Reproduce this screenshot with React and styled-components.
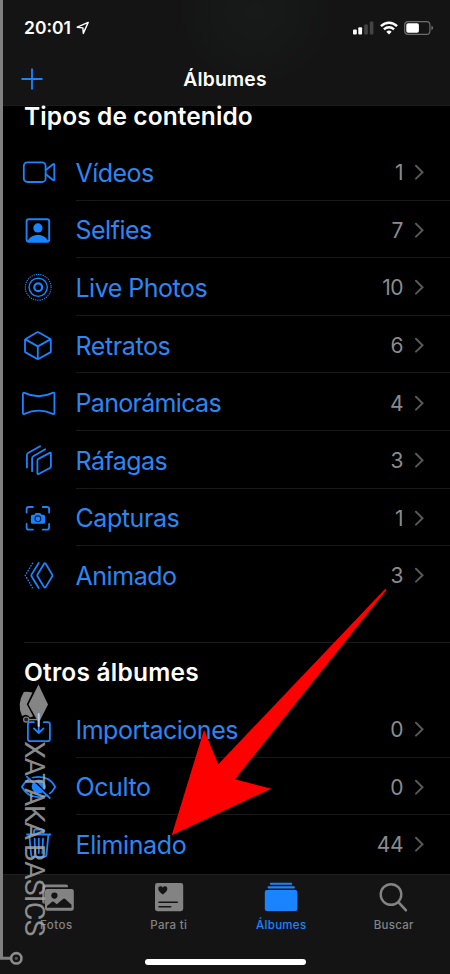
import React from "react";
import styled, { createGlobalStyle } from "styled-components";

const GlobalStyle = createGlobalStyle`
  body {
    margin: 0;
    background: #000;
    font-family: Inter, "Liberation Sans", sans-serif;
  }
`;

const Screen = styled.div`
  position: relative;
  display: flex;
  flex-direction: column;
  width: 450px;
  height: 974px;
  overflow: hidden;
  background: #000;
`;

const Header = styled.header`
  box-sizing: border-box;
  height: 106px;
  flex-shrink: 0;
  background: radial-gradient(circle at 255px 10px, #181a1a 0, #141414 80px);
  border-bottom: 1px solid #1b1b1b;
`;

const StatusBar = styled.div`
  display: flex;
  justify-content: space-between;
  align-items: center;
  height: 55px;
  padding: 0 16px 0 24px;
`;

const StatusGroup = styled.div`
  display: flex;
  align-items: center;
  gap: ${(props) => props.$gap}px;
`;

const Time = styled.span`
  color: #fff;
  font-size: 17.5px;
  font-weight: 600;
`;

const NavBar = styled.nav`
  display: grid;
  grid-template-columns: 60px 1fr 60px;
  align-items: center;
  height: 48px;
`;

const AddButton = styled.button`
  display: flex;
  padding: 0 0 0 21px;
  border: none;
  background: none;
`;

const NavTitle = styled.h1`
  margin: 0;
  color: #fff;
  font-size: 19.3px;
  font-weight: 600;
  line-height: 24px;
  text-align: center;
  letter-spacing: 0.15px;
`;

const Content = styled.main`
  flex: 1;
  min-height: 0;
`;

const Section = styled.section`
  padding-bottom: ${(props) => props.$bottom || 0}px;
`;

const SectionTitle = styled.h2`
  box-sizing: border-box;
  height: ${(props) => props.$height}px;
  margin: 0 0 0 24px;
  padding-top: ${(props) => props.$top}px;
  border-top: ${(props) => (props.$line ? "1px solid #1c1c1c" : "none")};
  color: #fff;
  font-size: 24.5px;
  font-weight: 600;
  line-height: 19px;
  letter-spacing: ${(props) => props.$spacing}px;
`;

const Row = styled.div`
  display: flex;
  height: 57.6px;
  padding-left: 20.2px;
`;

const IconBox = styled.div`
  display: flex;
  align-items: center;
  width: 55.8px;
  padding-top: 1px;
  flex-shrink: 0;
`;

const RowBody = styled.div`
  box-sizing: border-box;
  display: flex;
  align-items: center;
  flex: 1;
  padding-right: 25px;
  border-bottom: 1px solid ${(props) => (props.$last ? "transparent" : "#191919")};
`;

const Name = styled.span`
  flex: 1;
  margin-left: -0.5px;
  padding-top: 3px;
  color: #2b87f3;
  font-size: 25px;
  line-height: 30px;
  letter-spacing: ${(props) => props.$spacing}px;
`;

const Count = styled.span`
  margin-right: 11px;
  padding-top: 4px;
  color: #8b8b8e;
  font-size: 21px;
  line-height: 26px;
  letter-spacing: -0.5px;
`;

const TabBar = styled.footer`
  box-sizing: border-box;
  height: 100px;
  flex-shrink: 0;
  background: #141414;
  border-top: 1px solid #1f1f1f;
`;

const Tabs = styled.div`
  display: grid;
  grid-template-columns: repeat(4, 1fr);
  height: 84px;
`;

const Tab = styled.div`
  display: flex;
  flex-direction: column;
  align-items: center;
  padding-top: 5px;
  color: ${(props) => (props.$active ? "#1a84ff" : "#838383")};
`;

const TabLabel = styled.span`
  margin-top: 2px;
  font-size: 11.5px;
  font-weight: 500;
  line-height: 14px;
  letter-spacing: ${(props) => props.$spacing}px;
`;

const HomeIndicator = styled.div`
  width: 161px;
  height: 6px;
  margin: 0 auto;
  border-radius: 3px;
  background: #fff;
`;

const Overlay = styled.svg`
  position: absolute;
  top: 0;
  left: 0;
  pointer-events: none;
`;

const Watermark = styled.div`
  position: absolute;
  top: 741px;
  left: 16.5px;
  display: flex;
  gap: 5px;
  color: rgba(170, 170, 170, 0.82);
  font-family: Roboto, sans-serif;
  font-size: 28.5px;
  line-height: 34px;
  writing-mode: vertical-rl;
`;

const WatermarkWord = styled.span`
  letter-spacing: ${(props) => props.$spacing}px;
`;

const LineIcon = ({ children }) => (
  <svg
    width="36"
    height="36"
    viewBox="0 0 36 36"
    fill="none"
    stroke="#1a84ff"
    strokeWidth="1.8"
    strokeLinecap="round"
    strokeLinejoin="round"
  >
    {children}
  </svg>
);

const icons = {
  video: (
    <>
      <rect x="3.8" y="8.4" width="21.8" height="19.6" rx="3.6" />
      <path d="M25.8 16 33 10.2Q34.3 9.4 34.3 10.8V25.4Q34.3 26.8 33 26L25.8 20.2" />
    </>
  ),
  selfie: (
    <>
      <rect x="6.6" y="7.2" width="22.6" height="22.6" rx="2.2" strokeWidth="1.9" />
      <circle cx="17.9" cy="15.9" r="4.6" fill="#1a84ff" stroke="none" />
      <path d="M7.3 29.5C9.3 25.3 12.8 23 17.9 23S26.3 25.3 28.5 29.5Z" fill="#1a84ff" stroke="none" />
    </>
  ),
  live: (
    <>
      <circle cx="18.2" cy="18.3" r="3.9" strokeWidth="2.2" />
      <circle cx="18.2" cy="18.3" r="9.1" strokeWidth="1.4" />
      <circle cx="18.2" cy="18.3" r="12.9" strokeWidth="1.2" strokeDasharray="0.3 1.95" />
    </>
  ),
  cube: (
    <path d="M16.7 5.5Q17.8 4.8 18.9 5.5L30.4 12Q30.8 12.3 30.8 13V24.2Q30.8 25 30.2 25.4L18.8 31.8Q17.8 32.4 16.8 31.8L5.6 25.4Q5 25 5 24.2V13Q5 12.3 5.6 12ZM5.4 12.4 17.8 19.4 30.4 12.4M17.8 19.4V32" />
  ),
  panorama: (
    <path d="M2.9 9Q2.9 7.3 4.5 7.9Q18.5 14.6 32.7 7.9Q34.4 7.3 34.4 9V27.8Q34.4 29.5 32.7 28.9Q18.5 22.4 4.5 28.9Q2.9 29.5 2.9 27.8Z" />
  ),
  burst: (
    <>
      <path d="M17.4 18.6Q17.4 17.4 18.4 16.9L29.7 10.9Q30.9 10.4 30.9 11.6V24.2Q30.9 25.4 29.9 26L18.6 32Q17.4 32.5 17.4 31.3Z" />
      <path d="M12.1 29.2V16.2Q12.1 14.8 13.2 14.2L25.2 7.2" />
      <path d="M6.9 25.5V13Q6.9 11.6 8 11L20.1 4.2" />
    </>
  ),
  capture: (
    <>
      <path
        d="M6.6 12.5V9.2Q6.6 7 8.8 7H12.9M22.7 7H26.9Q29.1 7 29.1 9.2V12.5M29.1 24V27.4Q29.1 29.6 26.9 29.6H22.7M12.9 29.6H8.8Q6.6 29.6 6.6 27.4V24"
        strokeWidth="1.8"
      />
      <path
        d="M12.4 14.7H14.4L15.6 13.1H20.3L21.5 14.7H23.4Q25 14.7 25 16.2V22.2Q25 23.7 23.4 23.7H12.4Q10.9 23.7 10.9 22.2V16.2Q10.9 14.7 12.4 14.7Z"
        fill="#1a84ff"
        stroke="none"
      />
      <circle cx="17.9" cy="18.8" r="2.9" stroke="#061c38" strokeWidth="1.1" />
    </>
  ),
  animated: (
    <>
      <path d="M24.1 6.8Q24.9 5.6 25.7 6.8L32.2 17.6Q32.7 18.4 32.2 19.2L25.7 30.1Q24.9 31.3 24.1 30.1L17.5 19.2Q17 18.4 17.5 17.6Z" />
      <path d="M18.7 6 11.5 17.6Q11 18.4 11.5 19.2L18.7 31" />
      <path d="M12.5 6.3 5.3 18.4 12.5 30.7" strokeDasharray="0.3 2.5" strokeWidth="1.5" />
    </>
  ),
  importIn: (
    <>
      <path d="M13.8 11.2H10.1Q7.9 11.2 7.9 13.4V28Q7.9 30.2 10.1 30.2H27.7Q29.9 30.2 29.9 28V13.4Q29.9 11.2 27.7 11.2H23.9" />
      <path d="M18.7 3.6V21.8M13.9 17.4 18.7 22 23.5 17.4" />
    </>
  ),
  hidden: (
    <>
      <path d="M1.9 17.8C5.4 11.3 11.4 7.8 18.4 7.8S31.9 11.3 35.2 17.8C31.9 24.3 25.4 28.1 18.4 28.1S5.4 24.3 1.9 17.8Z" />
      <circle cx="18.7" cy="17.6" r="7" fill="#1a84ff" stroke="none" />
      <path d="M9.2 7.4 31.9 28.6" stroke="#000" strokeWidth="1.8" />
      <path d="M6.8 7.6 29.8 29" />
    </>
  ),
  trash: (
    <>
      <path d="M7 8.5H30.4M9.2 8.7 11.2 29.2Q11.4 30.9 13 30.9H24.6Q26.2 30.9 26.4 29.2L28.4 8.7" />
      <path d="M14 8.2V5.2Q14 3.5 15.7 3.5H21.8Q23.5 3.5 23.5 5.2V8.2M14.6 12.7 15.2 27M18.8 12.7V27M23 12.7 22.4 27" />
    </>
  ),
};

const mediaTypes = [
  { icon: "video", name: "Vídeos", count: 1, spacing: -0.55 },
  { icon: "selfie", name: "Selfies", count: 7, spacing: -0.5 },
  { icon: "live", name: "Live Photos", count: 10, spacing: -0.5 },
  { icon: "cube", name: "Retratos", count: 6, spacing: -0.4 },
  { icon: "panorama", name: "Panorámicas", count: 4, spacing: -0.68 },
  { icon: "burst", name: "Ráfagas", count: 3, spacing: -0.53 },
  { icon: "capture", name: "Capturas", count: 1, spacing: -0.42 },
  { icon: "animated", name: "Animado", count: 3, spacing: -0.45 },
];

const otherAlbums = [
  { icon: "importIn", name: "Importaciones", count: 0, spacing: -0.5 },
  { icon: "hidden", name: "Oculto", count: 0, spacing: -0.4 },
  { icon: "trash", name: "Eliminado", count: 44, spacing: -0.38 },
];

const Chevron = () => (
  <svg width="11" height="18" viewBox="0 0 11 18" fill="none">
    <path d="M2 3.8 8.5 10.2 2 16.6" stroke="#58585b" strokeWidth="2" strokeLinecap="round" />
  </svg>
);

const AlbumList = ({ albums }) =>
  albums.map(({ icon, name, count, spacing }, i) => (
    <Row key={name}>
      <IconBox>
        <LineIcon>{icons[icon]}</LineIcon>
      </IconBox>
      <RowBody $last={i === albums.length - 1}>
        <Name $spacing={spacing}>{name}</Name>
        <Count>{count}</Count>
        <Chevron />
      </RowBody>
    </Row>
  ));

const LocationIcon = () => (
  <svg width="14" height="14" viewBox="0 0 14 14" fill="none">
    <path d="M1.2 6.2 12.2 1.4 7.3 12.4 6.9 6.9Z" stroke="#fff" strokeWidth="1.4" strokeLinejoin="round" />
  </svg>
);

const SignalIcon = () => (
  <svg width="21" height="14" viewBox="0 0 21 14">
    <rect x="0" y="8.6" width="3.8" height="5" rx="1" fill="#fff" />
    <rect x="5.3" y="6.3" width="3.8" height="7.3" rx="1" fill="#fff" />
    <rect x="11.2" y="3.4" width="3.6" height="10.2" rx="1" fill="#444" />
    <rect x="16.8" y="0.6" width="3.6" height="13" rx="1" fill="#444" />
  </svg>
);

const WifiIcon = () => (
  <svg width="18" height="14" viewBox="0 0 18 14" fill="none" stroke="#fff" strokeWidth="2.4">
    <path d="M0.9 5.2Q4.5 1.7 9 1.7T17.1 5.2" />
    <path d="M3.9 8.3Q6.2 6.2 9 6.2T14.1 8.3" />
    <path d="M6.3 10.7Q9 8.4 11.7 10.7L9 13.5Z" fill="#fff" stroke="none" />
  </svg>
);

const BatteryIcon = () => (
  <svg width="30" height="14" viewBox="0 0 30 14">
    <rect x="0.7" y="0.7" width="25.2" height="12.6" rx="3.4" fill="none" stroke="#6d6d6d" strokeWidth="1.2" />
    <rect x="2.3" y="2.3" width="12.6" height="9.4" rx="1.8" fill="#fff" />
    <path d="M27.4 4.8Q29.2 5.4 29.2 7T27.4 9.2Z" fill="#6d6d6d" />
  </svg>
);

const PhotosIcon = () => (
  <svg width="36" height="36" viewBox="0 0 36 36">
    <path d="M4.2 7.5Q4.2 4.5 6.8 4.5H28.2Q30 4.5 30 6.3V7.2H8.2Q6.7 7.2 6.7 8.7V23.7H6.2Q4.2 23.7 4.2 21.7Z" fill="currentColor" />
    <rect x="7" y="9" width="28.8" height="21.8" rx="2.2" fill="currentColor" />
    <circle cx="16.4" cy="15.6" r="3.1" fill="#141414" />
    <path d="M9 27.8V26L14.2 21.7Q15 21.2 15.8 21.8L18.7 24.2 25.4 18.8Q26.3 18.2 27.2 18.9L33.5 24.8V27.8Z" fill="#141414" />
  </svg>
);

const ForYouIcon = () => (
  <svg width="36" height="36" viewBox="0 0 36 36">
    <rect x="4" y="3" width="28.2" height="28.2" rx="2.4" fill="currentColor" />
    <path d="M11.8 14.6C8.8 12.2 7.3 10.7 7.3 8.7C7.3 5.8 10.7 5.5 11.8 7.7C12.9 5.5 16.3 5.8 16.3 8.7C16.3 10.7 14.8 12.2 11.8 14.6Z" fill="#141414" />
    <path d="M8 22.3H26.3M8 26.7H19.7" stroke="#141414" strokeWidth="1.5" strokeLinecap="round" />
  </svg>
);

const AlbumsIcon = () => (
  <svg width="36" height="36" viewBox="0 0 36 36" fill="currentColor">
    <rect x="6.9" y="2.7" width="22.2" height="2" rx="0.6" />
    <rect x="4.6" y="6.3" width="27.2" height="2.2" rx="0.8" />
    <rect x="1.8" y="10" width="32.6" height="21" rx="2" />
  </svg>
);

const SearchIcon = () => (
  <svg width="36" height="36" viewBox="0 0 36 36" fill="none" stroke="currentColor" strokeLinecap="round">
    <circle cx="15" cy="14.5" r="10.3" strokeWidth="2.4" />
    <path d="M22.6 22.4 29.8 30.2" strokeWidth="2.7" />
  </svg>
);

const tabs = [
  { label: "Fotos", Icon: PhotosIcon, spacing: 0.5 },
  { label: "Para ti", Icon: ForYouIcon, spacing: 0.3 },
  { label: "Álbumes", Icon: AlbumsIcon, spacing: 0.3, active: true },
  { label: "Buscar", Icon: SearchIcon, spacing: 0.3 },
];

const App = () => (
  <>
    <GlobalStyle />
    <Screen>
      <Header>
        <StatusBar>
          <StatusGroup $gap={5}>
            <Time>20:01</Time>
            <LocationIcon />
          </StatusGroup>
          <StatusGroup $gap={6}>
            <SignalIcon />
            <WifiIcon />
            <BatteryIcon />
          </StatusGroup>
        </StatusBar>
        <NavBar>
          <AddButton>
            <svg width="22" height="22" viewBox="0 0 22 22">
              <path d="M11 0.5V21.5M0.5 11H21.5" stroke="#1a84ff" strokeWidth="1.8" />
            </svg>
          </AddButton>
          <NavTitle>Álbumes</NavTitle>
        </NavBar>
      </Header>

      <Content>
        <Section $bottom={38.4}>
          <SectionTitle $height={37} $top={1} $spacing={0.1}>
            Tipos de contenido
          </SectionTitle>
          <AlbumList albums={mediaTypes} />
        </Section>
        <Section>
          <SectionTitle $height={57.8} $top={20} $spacing={0.22} $line>
            Otros álbumes
          </SectionTitle>
          <AlbumList albums={otherAlbums} />
        </Section>
      </Content>

      <TabBar>
        <Tabs>
          {tabs.map(({ label, Icon, spacing, active }) => (
            <Tab key={label} $active={active}>
              <Icon />
              <TabLabel $spacing={spacing}>{label}</TabLabel>
            </Tab>
          ))}
        </Tabs>
        <HomeIndicator />
      </TabBar>

      <Watermark>
        <WatermarkWord $spacing={-1.3}>XATAKA</WatermarkWord>
        <WatermarkWord $spacing={-0.8}>BASICS</WatermarkWord>
      </Watermark>
      <Overlay width="450" height="974" viewBox="0 0 450 974">
        <g fill="#808080">
          <path d="M0 0H3V956.7H11V959.8H0Z" />
          <circle cx="16.3" cy="958.3" r="5.2" fill="#141414" stroke="#8c8c8c" strokeWidth="2.6" />
          <circle cx="16.3" cy="958.3" r="1.6" fill="#555" />
        </g>
        <g fill="#858585">
          <path d="M38.5 684.5 48 704.5 38.7 723 28.5 704.5Z" />
          <path d="M23.8 692Q27 691.2 32.5 692.5L26.8 704.3 33.2 716.2 30 717.5Q28.5 714.8 25.5 714.8L22 716Q16.5 704 23.8 692Z" />
          <circle cx="26.2" cy="719.6" r="2.6" fill="#222" stroke="#858585" strokeWidth="1.2" />
          <path d="M28.8 719.6H38" stroke="#858585" strokeWidth="1.4" />
        </g>
        <path d="M38.7 714V726" stroke="#a9cdf5" strokeWidth="2" strokeLinecap="round" />
        <path d="M171.7 835.2 204 729.8 218.3 764.2 385.3 588.7 386.5 590 235 779.2 271.3 788.7Z" fill="#f00" />
      </Overlay>
    </Screen>
  </>
);

export default App;
